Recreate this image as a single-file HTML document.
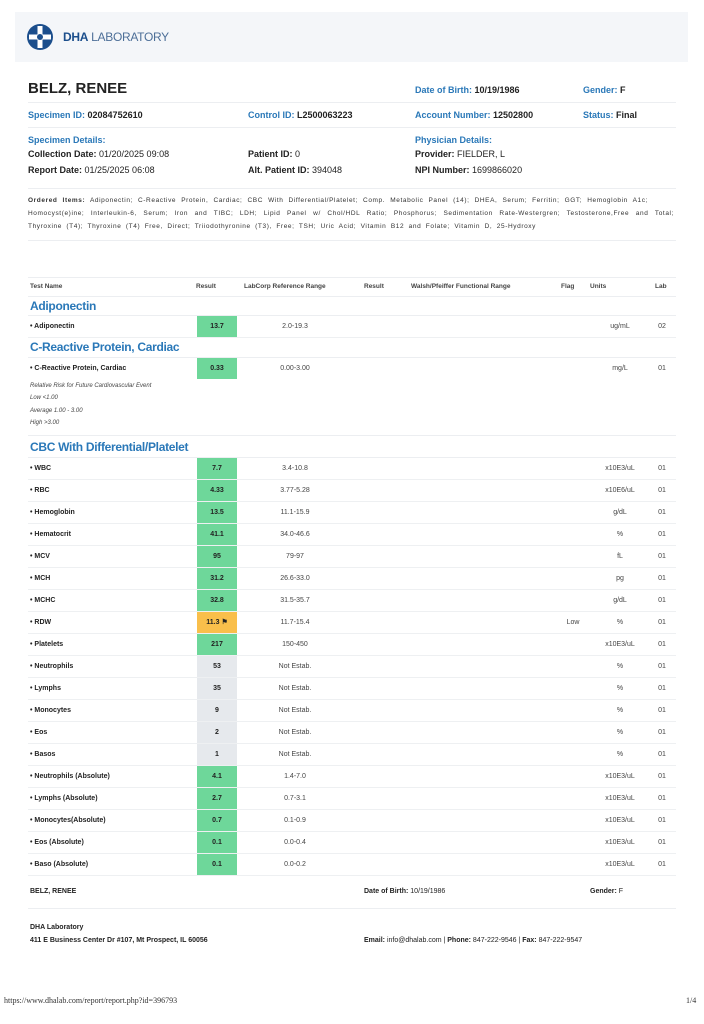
<!DOCTYPE html>
<html><head><meta charset="utf-8"><style>
*{margin:0;padding:0;box-sizing:border-box}
body{width:704px;height:1024px;background:#fff;position:relative;font-family:"Liberation Sans",sans-serif;color:#222;overflow:hidden}
.a{position:absolute;white-space:nowrap}
.b{color:#2a78b8}
.hd{position:absolute;left:15px;top:12px;width:673px;height:50px;background:#f4f6f9}
.ln{position:absolute;left:28px;width:648px;height:1px;background:#eceef1}
.f9{font-size:9px}
.r{position:absolute;left:28px;width:648px;height:22px;border-bottom:1px solid #eef0f2;font-size:7px;line-height:21px}
.r span{position:absolute;top:0}
.n{left:2px;font-weight:bold}
.v{left:169px;width:40px;height:21px;text-align:center;font-weight:bold;background:#6ed79a}
.g{background:#e6e9ed}
.o{background:#f9bf4b}
.rg{left:207px;width:120px;text-align:center;color:#444}
.u{left:562px;width:60px;text-align:center;color:#444}
.lb{left:625px;width:18px;text-align:center;color:#444}
.fl{left:530px;width:30px;text-align:center;color:#444}
.sec{position:absolute;left:30px;font-size:12px;font-weight:bold;color:#2a78b8;letter-spacing:-0.3px}
.th{position:absolute;top:283px;font-size:6.5px;font-weight:bold;color:#444}
.oi{position:absolute;left:28px;font-size:6.5px;letter-spacing:0.6px;color:#333;text-align:justify;text-align-last:justify;white-space:nowrap}
</style></head><body>
<div class="hd"></div>
<svg class="a" style="left:26px;top:23px" width="28" height="28" viewBox="0 0 28 28"><circle cx="14" cy="14" r="13" fill="#1b4e8c"/><rect x="11.5" y="3" width="5" height="22" fill="#fff"/><rect x="3" y="11.5" width="22" height="5" fill="#fff"/><circle cx="14" cy="14" r="3" fill="#1b4e8c"/></svg>
<div class="a" style="left:63px;top:30px;font-size:12px;color:#1b4e8c;letter-spacing:-0.3px"><b>DHA</b> <span style="color:#4d6f98">LABORATORY</span></div>

<div class="a" style="left:28px;top:80px;font-size:15px;font-weight:bold">BELZ, RENEE</div>
<div class="a f9" style="left:415px;top:85px"><b class="b">Date of Birth:</b> <b>10/19/1986</b></div>
<div class="a f9" style="left:583px;top:85px"><b class="b">Gender:</b> <b>F</b></div>
<div class="ln" style="top:102px"></div>
<div class="a f9" style="left:28px;top:110px"><b class="b">Specimen ID:</b> <b>02084752610</b></div>
<div class="a f9" style="left:248px;top:110px"><b class="b">Control ID:</b> <b>L2500063223</b></div>
<div class="a f9" style="left:415px;top:110px"><b class="b">Account Number:</b> <b>12502800</b></div>
<div class="a f9" style="left:583px;top:110px"><b class="b">Status:</b> <b>Final</b></div>
<div class="ln" style="top:127px"></div>
<div class="a f9" style="left:28px;top:135px"><b class="b">Specimen Details:</b></div>
<div class="a f9" style="left:28px;top:149px"><b>Collection Date:</b> 01/20/2025 09:08</div>
<div class="a f9" style="left:28px;top:165px"><b>Report Date:</b> 01/25/2025 06:08</div>
<div class="a f9" style="left:248px;top:149px"><b>Patient ID:</b> 0</div>
<div class="a f9" style="left:248px;top:165px"><b>Alt. Patient ID:</b> 394048</div>
<div class="a f9" style="left:415px;top:135px"><b class="b">Physician Details:</b></div>
<div class="a f9" style="left:415px;top:149px"><b>Provider:</b> FIELDER, L</div>
<div class="a f9" style="left:415px;top:165px"><b>NPI Number:</b> 1699866020</div>
<div class="ln" style="top:188px"></div>
<div class="oi" style="top:197px;width:620px"><b>Ordered Items:</b> Adiponectin; C-Reactive Protein, Cardiac; CBC With Differential/Platelet; Comp. Metabolic Panel (14); DHEA, Serum; Ferritin; GGT; Hemoglobin A1c;</div>
<div class="oi" style="top:210px;width:646px">Homocyst(e)ine; Interleukin-6, Serum; Iron and TIBC; LDH; Lipid Panel w/ Chol/HDL Ratio; Phosphorus; Sedimentation Rate-Westergren; Testosterone,Free and Total;</div>
<div class="oi" style="top:223px;width:508px">Thyroxine (T4); Thyroxine (T4) Free, Direct; Triiodothyronine (T3), Free; TSH; Uric Acid; Vitamin B12 and Folate; Vitamin D, 25-Hydroxy</div>
<div class="ln" style="top:240px"></div>

<div class="ln" style="top:277px"></div>
<div class="th" style="left:30px">Test Name</div>
<div class="th" style="left:196px">Result</div>
<div class="th" style="left:244px">LabCorp Reference Range</div>
<div class="th" style="left:364px">Result</div>
<div class="th" style="left:411px">Walsh/Pfeiffer Functional Range</div>
<div class="th" style="left:561px">Flag</div>
<div class="th" style="left:590px">Units</div>
<div class="th" style="left:655px">Lab</div>
<div class="ln" style="top:296px"></div>

<div class="sec" style="top:299px">Adiponectin</div>
<div class="ln" style="top:315px"></div>
<div class="r" style="top:316px"><span class="n">• Adiponectin</span><span class="v">13.7</span><span class="rg">2.0-19.3</span><span class="u">ug/mL</span><span class="lb">02</span></div>
<div class="sec" style="top:340px">C-Reactive Protein, Cardiac</div>
<div class="ln" style="top:357px"></div>
<div class="r" style="top:358px;border:none"><span class="n">• C-Reactive Protein, Cardiac</span><span class="v">0.33</span><span class="rg">0.00-3.00</span><span class="u">mg/L</span><span class="lb">01</span></div>
<div class="a" style="left:30px;top:380px;font-size:6px;line-height:12.3px;font-style:italic;color:#444">Relative Risk for Future Cardiovascular Event<br>Low &lt;1.00<br>Average 1.00 - 3.00<br>High &gt;3.00</div>
<div class="ln" style="top:435px"></div>
<div class="sec" style="top:440px">CBC With Differential/Platelet</div>
<div class="ln" style="top:457px"></div>

<div class="r" style="top:458px"><span class="n">• WBC</span><span class="v">7.7</span><span class="rg">3.4-10.8</span><span class="u">x10E3/uL</span><span class="lb">01</span></div>
<div class="r" style="top:480px"><span class="n">• RBC</span><span class="v">4.33</span><span class="rg">3.77-5.28</span><span class="u">x10E6/uL</span><span class="lb">01</span></div>
<div class="r" style="top:502px"><span class="n">• Hemoglobin</span><span class="v">13.5</span><span class="rg">11.1-15.9</span><span class="u">g/dL</span><span class="lb">01</span></div>
<div class="r" style="top:524px"><span class="n">• Hematocrit</span><span class="v">41.1</span><span class="rg">34.0-46.6</span><span class="u">%</span><span class="lb">01</span></div>
<div class="r" style="top:546px"><span class="n">• MCV</span><span class="v">95</span><span class="rg">79-97</span><span class="u">fL</span><span class="lb">01</span></div>
<div class="r" style="top:568px"><span class="n">• MCH</span><span class="v">31.2</span><span class="rg">26.6-33.0</span><span class="u">pg</span><span class="lb">01</span></div>
<div class="r" style="top:590px"><span class="n">• MCHC</span><span class="v">32.8</span><span class="rg">31.5-35.7</span><span class="u">g/dL</span><span class="lb">01</span></div>
<div class="r" style="top:612px"><span class="n">• RDW</span><span class="v o">11.3 &#9873;</span><span class="rg">11.7-15.4</span><span class="fl">Low</span><span class="u">%</span><span class="lb">01</span></div>
<div class="r" style="top:634px"><span class="n">• Platelets</span><span class="v">217</span><span class="rg">150-450</span><span class="u">x10E3/uL</span><span class="lb">01</span></div>
<div class="r" style="top:656px"><span class="n">• Neutrophils</span><span class="v g">53</span><span class="rg">Not Estab.</span><span class="u">%</span><span class="lb">01</span></div>
<div class="r" style="top:678px"><span class="n">• Lymphs</span><span class="v g">35</span><span class="rg">Not Estab.</span><span class="u">%</span><span class="lb">01</span></div>
<div class="r" style="top:700px"><span class="n">• Monocytes</span><span class="v g">9</span><span class="rg">Not Estab.</span><span class="u">%</span><span class="lb">01</span></div>
<div class="r" style="top:722px"><span class="n">• Eos</span><span class="v g">2</span><span class="rg">Not Estab.</span><span class="u">%</span><span class="lb">01</span></div>
<div class="r" style="top:744px"><span class="n">• Basos</span><span class="v g">1</span><span class="rg">Not Estab.</span><span class="u">%</span><span class="lb">01</span></div>
<div class="r" style="top:766px"><span class="n">• Neutrophils (Absolute)</span><span class="v">4.1</span><span class="rg">1.4-7.0</span><span class="u">x10E3/uL</span><span class="lb">01</span></div>
<div class="r" style="top:788px"><span class="n">• Lymphs (Absolute)</span><span class="v">2.7</span><span class="rg">0.7-3.1</span><span class="u">x10E3/uL</span><span class="lb">01</span></div>
<div class="r" style="top:810px"><span class="n">• Monocytes(Absolute)</span><span class="v">0.7</span><span class="rg">0.1-0.9</span><span class="u">x10E3/uL</span><span class="lb">01</span></div>
<div class="r" style="top:832px"><span class="n">• Eos (Absolute)</span><span class="v">0.1</span><span class="rg">0.0-0.4</span><span class="u">x10E3/uL</span><span class="lb">01</span></div>
<div class="r" style="top:854px"><span class="n">• Baso (Absolute)</span><span class="v">0.1</span><span class="rg">0.0-0.2</span><span class="u">x10E3/uL</span><span class="lb">01</span></div>

<div class="a" style="left:30px;top:888px;font-size:7px;font-weight:bold">BELZ, RENEE</div>
<div class="a" style="left:364px;top:888px;font-size:7px"><b>Date of Birth:</b> 10/19/1986</div>
<div class="a" style="left:590px;top:888px;font-size:7px"><b>Gender:</b> F</div>
<div class="ln" style="top:908px"></div>
<div class="a" style="left:30px;top:924px;font-size:7px;font-weight:bold">DHA Laboratory</div>
<div class="a" style="left:30px;top:937px;font-size:7px;font-weight:bold">411 E Business Center Dr #107, Mt Prospect, IL 60056</div>
<div class="a" style="left:364px;top:937px;font-size:7px"><b>Email:</b> info@dhalab.com | <b>Phone:</b> 847-222-9546 | <b>Fax:</b> 847-222-9547</div>
<div class="a" style="left:4px;top:996px;font-size:8px;font-family:'Liberation Serif',serif;color:#333">https://www.dhalab.com/report/report.php?id=396793</div>
<div class="a" style="left:686px;top:996px;font-size:8px;font-family:'Liberation Serif',serif;color:#333">1/4</div>
</body></html>
